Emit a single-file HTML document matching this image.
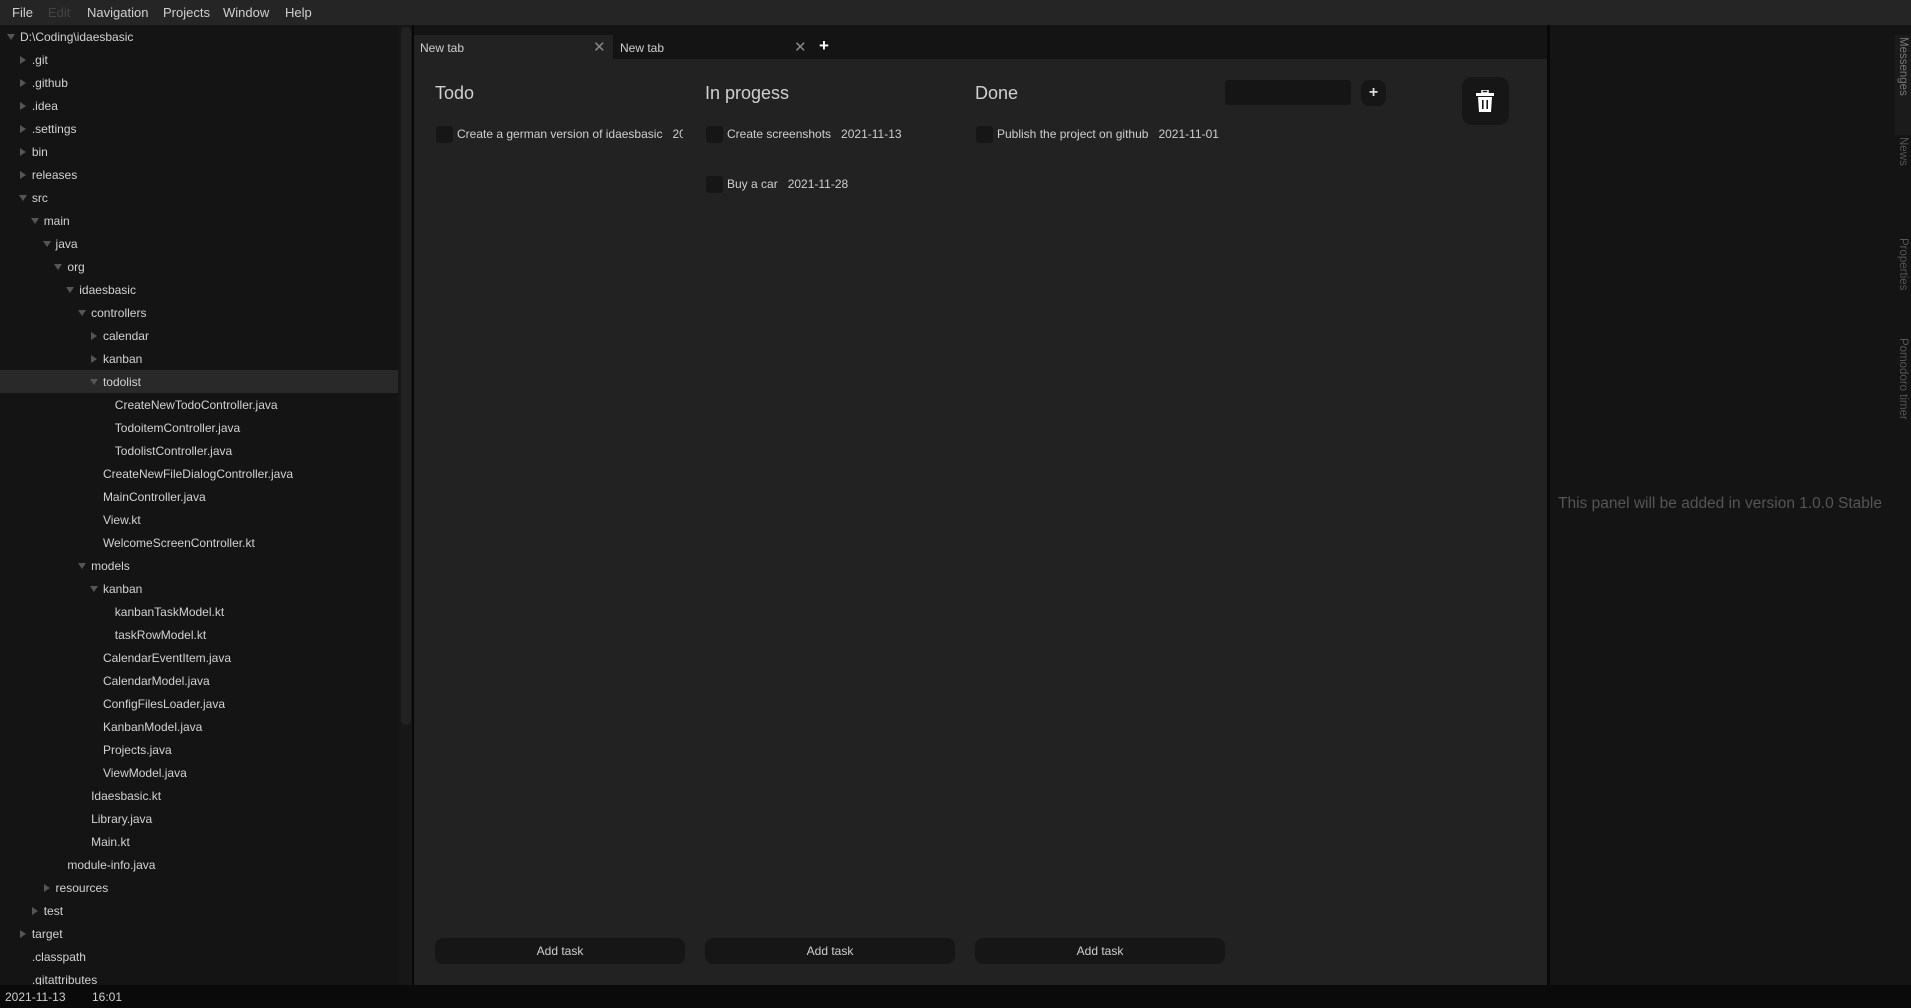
<!DOCTYPE html>
<html><head><meta charset="utf-8"><style>
*{margin:0;padding:0;box-sizing:border-box}
body{width:1911px;height:1008px;overflow:hidden;background:#141414;font-family:"Liberation Sans",sans-serif;color:#cfcfcf;position:relative}
.a{position:absolute;white-space:nowrap}
#menu{left:0;top:0;width:1911px;height:25px;background:#252525;font-size:13px}
#menu span{position:absolute;top:5px;color:#d0d0d0}
#tree{left:0;top:25px;width:412px;height:960px;background:#141414;overflow:hidden}
.r{position:absolute;height:23px;font-size:12px;line-height:25px;color:#d2d2d2}
.tri{position:absolute;width:0;height:0}
.tr{border-top:4px solid transparent;border-bottom:4px solid transparent;border-left:6px solid #555}
.td{border-left:4px solid transparent;border-right:4px solid transparent;border-top:6px solid #555}
#center{left:414px;top:25px;width:1133px;height:960px;background:#222}
.col{font-size:18px;color:#d0d0d0}
.cb{position:absolute;width:17px;height:17px;background:#161616;border-radius:3px}
.it{font-size:12px;color:#cfcfcf}
.btn{position:absolute;width:250px;height:26px;background:#161616;border-radius:8px;font-size:12px;color:#cfcfcf;text-align:center;line-height:26px;top:938px}
.side{position:absolute;writing-mode:vertical-rl;font-size:11.5px;color:#555;left:1897px}
</style></head><body>
<div class="a" id="menu">
<span style="left:12px">File</span><span style="left:48px;color:#444">Edit</span><span style="left:87px">Navigation</span><span style="left:163px">Projects</span><span style="left:223px">Window</span><span style="left:285px">Help</span>
</div>
<div class="a" id="tree">
<div class="a" style="left:0;top:345px;width:400px;height:23px;background:#292929"></div>
<div class="a" style="left:398px;top:0;width:14px;height:960px;background:#171717"></div>
<div class="a" style="left:401px;top:2px;width:10px;height:698px;background:#222;border-radius:5px"></div>
<div id="rows"></div>
</div>
<div class="a" style="left:412px;top:25px;width:2px;height:960px;background:#080808"></div>
<div class="a" id="center">
<div class="a" style="left:0;top:0;width:1133px;height:34px;background:#141414"></div>
<div class="a" style="left:0;top:10px;width:199px;height:24px;background:#222"></div>
<div class="a" style="left:6px;top:16px;font-size:12px">New tab</div>
<div class="a" style="left:179px;top:13px;font-size:15px;color:#888">✕</div>
<div class="a" style="left:206px;top:16px;font-size:12px">New tab</div>
<div class="a" style="left:380px;top:13px;font-size:15px;color:#888">✕</div>
<div class="a" style="left:405px;top:11px;font-size:17px;color:#fff;font-weight:bold">+</div>
</div>
<div class="a col" style="left:435px;top:83px">Todo</div>
<div class="a col" style="left:705px;top:83px">In progess</div>
<div class="a col" style="left:975px;top:83px">Done</div>
<div class="cb" style="left:436px;top:126px"></div>
<div class="a it" style="left:457px;top:127px;width:226px;overflow:hidden">Create a german version of idaesbasic&nbsp;&nbsp;&nbsp;2021-11-20</div>
<div class="cb" style="left:706px;top:126px"></div>
<div class="a it" style="left:727px;top:127px">Create screenshots&nbsp;&nbsp;&nbsp;2021-11-13</div>
<div class="cb" style="left:706px;top:176px"></div>
<div class="a it" style="left:727px;top:177px">Buy a car&nbsp;&nbsp;&nbsp;2021-11-28</div>
<div class="cb" style="left:976px;top:126px"></div>
<div class="a it" style="left:997px;top:127px">Publish the project on github&nbsp;&nbsp;&nbsp;2021-11-01</div>
<div class="a" style="left:1225px;top:80px;width:126px;height:25px;background:#151515;border-radius:3px"></div>
<div class="a" style="left:1361px;top:80px;width:25px;height:26px;background:#161616;border-radius:8px;color:#ddd;font-size:16px;font-weight:bold;text-align:center;line-height:25px">+</div>
<div class="a" style="left:1462px;top:77px;width:47px;height:48px;background:#161616;border-radius:10px"></div>
<svg class="a" style="left:1475px;top:90px" width="20" height="23" viewBox="0 0 20 23"><rect x="1" y="3" width="18" height="3" fill="#fff"/><rect x="7" y="0" width="6" height="3" fill="none" stroke="#fff" stroke-width="1.5"/><path d="M3 7h14l-1 15H4z" fill="#fff"/><rect x="7" y="10" width="1.6" height="9" fill="#161616"/><rect x="11.4" y="10" width="1.6" height="9" fill="#161616"/></svg>
<div class="btn" style="left:435px">Add task</div>
<div class="btn" style="left:705px">Add task</div>
<div class="btn" style="left:975px">Add task</div>
<div class="a" style="left:1547px;top:25px;width:3px;height:960px;background:#080808"></div>
<div class="a" style="left:1558px;top:495px;font-size:15.5px;color:#555">This panel will be added in version 1.0.0 Stable</div>
<div class="a" style="left:1895px;top:35px;width:16px;height:100px;background:#1b1b1b"></div>
<div class="side" style="top:37px;color:#777">Messenges</div>
<div class="side" style="top:137px">News</div>
<div class="side" style="top:238px">Properties</div>
<div class="side" style="top:338px">Pomodoro timer</div>
<div class="a" style="left:0;top:985px;width:1911px;height:23px;background:#0a0a0a"></div>
<div class="a" style="left:5px;top:990px;font-size:12px">2021-11-13</div>
<div class="a" style="left:92px;top:990px;font-size:12px">16:01</div>
<script>
var d=[[0,'D:\\Coding\\idaesbasic','d'],[1,'.git','r'],[1,'.github','r'],[1,'.idea','r'],[1,'.settings','r'],[1,'bin','r'],[1,'releases','r'],[1,'src','d'],[2,'main','d'],[3,'java','d'],[4,'org','d'],[5,'idaesbasic','d'],[6,'controllers','d'],[7,'calendar','r'],[7,'kanban','r'],[7,'todolist','d'],[8,'CreateNewTodoController.java'],[8,'TodoitemController.java'],[8,'TodolistController.java'],[7,'CreateNewFileDialogController.java'],[7,'MainController.java'],[7,'View.kt'],[7,'WelcomeScreenController.kt'],[6,'models','d'],[7,'kanban','d'],[8,'kanbanTaskModel.kt'],[8,'taskRowModel.kt'],[7,'CalendarEventItem.java'],[7,'CalendarModel.java'],[7,'ConfigFilesLoader.java'],[7,'KanbanModel.java'],[7,'Projects.java'],[7,'ViewModel.java'],[6,'Idaesbasic.kt'],[6,'Library.java'],[6,'Main.kt'],[4,'module-info.java'],[3,'resources','r'],[2,'test','r'],[1,'target','r'],[1,'.classpath'],[1,'.gitattributes']];
var h='';d.forEach(function(e,i){var y=i*23,x=20+e[0]*11.85;h+='<div class="r" style="left:'+x+'px;top:'+y+'px">'+e[1]+'</div>';if(e[2]=='r')h+='<div class="tri tr" style="left:'+(x-12)+'px;top:'+(y+8)+'px"></div>';if(e[2]=='d')h+='<div class="tri td" style="left:'+(x-13)+'px;top:'+(y+9)+'px"></div>';});
document.getElementById('rows').innerHTML=h;
</script>
</body></html>
